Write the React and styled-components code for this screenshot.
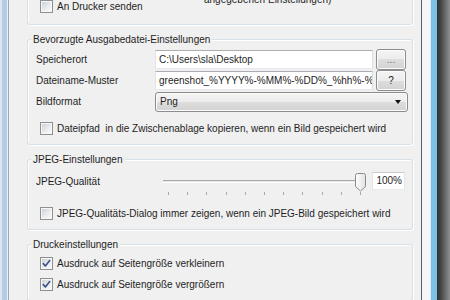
import styled, { createGlobalStyle } from "styled-components";

const GlobalStyle = createGlobalStyle`
  html, body {
    margin: 0;
    padding: 0;
  }
  body {
    width: 450px;
    height: 300px;
    overflow: hidden;
    font-family: "Liberation Sans", Arial, sans-serif;
    font-size: 10px;
    color: #1e1e1e;
  }
`;

const Window = styled.div`
  display: flex;
  width: 450px;
  height: 300px;
  overflow: hidden;
`;

const LeftFrame = styled.div`
  flex: none;
  width: 9px;
  background: linear-gradient(
    to right,
    #dde6ee 0 2px,
    #b3cde5 2px 7px,
    #eaf1f8 7px 8px,
    #9eabb6 8px 9px
  );
`;

const RightFrame = styled.div`
  flex: none;
  width: 29px;
  background: linear-gradient(
    to right,
    #5c6064 0 1px,
    #f3f5f7 1px 9px,
    #dfe9f2 9px 10px,
    #7cc0ea 10px 16px,
    #2c2e30 16px,
    #464748 20px,
    #8f9091 29px
  );
`;

const Content = styled.main`
  flex: 1;
  min-width: 0;
  overflow: hidden;
  margin-top: -36px;
  padding: 0 8px 0 18px;
  display: flex;
  flex-direction: column;
  gap: 8px;
  background: #f0f0f0;
`;

const Group = styled.fieldset`
  margin: 0;
  min-width: 0;
  padding: ${(p) => p.$pad};
  border: 1px solid #d5dfe5;
  border-radius: 3px;
  box-shadow: 1px 1px 0 #fff, inset 1px 1px 0 #fff;
`;

const Legend = styled.legend`
  margin-left: -5px;
  padding: 0 2px;
  line-height: 13px;
  background: #f0f0f0;
`;

const Body = styled.div`
  display: flex;
  flex-direction: column;
  gap: ${(p) => p.$gap}px;
`;

const TargetRow = styled.div`
  display: grid;
  grid-template-columns: 168px 1fr;
  align-items: end;
`;

const Note = styled.div`
  line-height: 13px;
  margin-bottom: 7px;
  white-space: nowrap;
`;

const CheckRow = styled.label`
  display: flex;
  align-items: center;
  gap: 4px;
  margin-left: 4px;
  line-height: 13px;
  white-space: nowrap;
`;

const Box = styled.span`
  flex: none;
  display: flex;
  align-items: center;
  justify-content: center;
  box-sizing: border-box;
  width: 13px;
  height: 13px;
  border: 1px solid #8e8f8f;
  background: linear-gradient(135deg, #c8ccd2 0%, #e9ebee 55%, #fbfbfb 100%);
  box-shadow: inset 0 0 0 1px #f7f7f7;
`;

const FormGrid = styled.div`
  display: grid;
  grid-template-columns: 116px minmax(0, 1fr) 30px;
  grid-auto-rows: 21px;
  column-gap: 3px;
  align-items: center;
`;

const Label = styled.span`
  line-height: 13px;
  white-space: nowrap;
`;

const TextField = styled.div`
  box-sizing: border-box;
  height: 19px;
  padding: 0 3px;
  line-height: 17px;
  white-space: nowrap;
  overflow: hidden;
  background: #fff;
  border: 1px solid;
  border-color: #abadb3 #dbdfe6 #e3e9ef #e2e3ea;
  text-align: ${(p) => (p.$right ? "right" : "left")};
`;

const Button = styled.button`
  box-sizing: border-box;
  height: 21px;
  padding: 0;
  font: inherit;
  color: ${(p) => (p.$muted ? "#6a6a6a" : "#1e1e1e")};
  border: 1px solid #8c8c8c;
  border-radius: 3px;
  background: linear-gradient(#f4f4f4 0%, #ececec 50%, #dedede 50%, #d2d2d2 100%);
  box-shadow: inset 0 0 0 1px #fbfbfb;
`;

const Select = styled.div`
  grid-column: 2 / 4;
  box-sizing: border-box;
  height: 20px;
  margin-right: -2px;
  padding: 0 6px 0 4px;
  display: flex;
  align-items: center;
  justify-content: space-between;
  border: 1px solid #8c8c8c;
  border-radius: 3px;
  background: linear-gradient(#f4f4f4 0%, #ececec 50%, #dedede 50%, #d2d2d2 100%);
  box-shadow: inset 0 0 0 1px #fbfbfb;
`;

const Arrow = styled.span`
  width: 0;
  height: 0;
  border-left: 3.5px solid transparent;
  border-right: 3.5px solid transparent;
  border-top: 4px solid #111;
`;

const QualityRow = styled.div`
  display: flex;
  align-items: flex-start;
`;

const QualityLabel = styled(Label)`
  flex: none;
  width: 124px;
  margin-top: 5px;
`;

const Slider = styled.div`
  position: relative;
  flex: none;
  width: 206px;
  height: 28px;
`;

const Track = styled.div`
  margin: 10px 4px 0 3px;
  height: 3px;
  box-sizing: border-box;
  background: #e6e8ea;
  border-top: 1px solid #a8a8a8;
  border-bottom: 1px solid #fff;
`;

const Ticks = styled.div`
  display: flex;
  justify-content: space-between;
  margin: 9px 5px 0 8px;
`;

const Tick = styled.span`
  width: 1px;
  height: 3px;
  background: #a9a9a9;
`;

const Thumb = styled.svg`
  position: absolute;
  left: 195px;
  top: 3px;
`;

const ValueBox = styled(TextField)`
  flex: none;
  width: 33px;
  height: 18px;
  margin: 2px 0 0 6px;
  line-height: 16px;
  padding: 0 2px;
  border-color: #c9cbd0 #e2e5ea #e6ebf0 #e2e4ea;
`;

function Check({ checked, children }) {
  return (
    <CheckRow>
      <Box>
        {checked && (
          <svg width="9" height="9" viewBox="0 0 9 9">
            <path
              d="M1.3 4.6 L3.4 7 L7.7 1.6"
              fill="none"
              stroke="#3c4f86"
              strokeWidth="1.6"
              strokeLinecap="round"
              strokeLinejoin="round"
            />
          </svg>
        )}
      </Box>
      <span>{children}</span>
    </CheckRow>
  );
}

export default function App() {
  return (
    <>
      <GlobalStyle />
      <Window>
        <LeftFrame />
        <Content>
          <Group $pad="3px 6px 11px 8px">
            <Legend>Ziel</Legend>
            <TargetRow>
              <Check>An Drucker senden</Check>
              <Note>
                Druckerauswahl anzeigen (mit den
                <br />
                angegebenen Einstellungen)
              </Note>
            </TargetRow>
          </Group>

          <Group $pad="3px 6px 9px 8px">
            <Legend>Bevorzugte Ausgabedatei-Einstellungen</Legend>
            <Body $gap={10}>
              <FormGrid>
                <Label>Speicherort</Label>
                <TextField>C:\Users\sla\Desktop</TextField>
                <Button $muted>...</Button>
                <Label>Dateiname-Muster</Label>
                <TextField>greenshot_%YYYY%-%MM%-%DD%_%hh%-%mm%-%ss%</TextField>
                <Button>?</Button>
                <Label>Bildformat</Label>
                <Select>
                  <span>Png</span>
                  <Arrow />
                </Select>
              </FormGrid>
              <Check>Dateipfad &nbsp;in die Zwischenablage kopieren, wenn ein Bild gespeichert wird</Check>
            </Body>
          </Group>

          <Group $pad="4px 6px 9px 8px">
            <Legend>JPEG-Einstellungen</Legend>
            <Body $gap={9}>
              <QualityRow>
                <QualityLabel>JPEG-Qualität</QualityLabel>
                <Slider>
                  <Track />
                  <Ticks>
                    {Array.from({ length: 11 }, (_, i) => (
                      <Tick key={i} />
                    ))}
                  </Ticks>
                  <Thumb width="11" height="19" viewBox="0 0 11 19">
                    <defs>
                      <linearGradient id="thumbFill" x1="0" y1="0" x2="1" y2="0">
                        <stop offset="0" stopColor="#ffffff" />
                        <stop offset="1" stopColor="#e2e2e2" />
                      </linearGradient>
                    </defs>
                    <path
                      d="M0.5 2.5 Q0.5 0.5 2.5 0.5 H8.5 Q10.5 0.5 10.5 2.5 V13.5 L5.5 18 L0.5 13.5 Z"
                      fill="url(#thumbFill)"
                      stroke="#8a8a8a"
                    />
                  </Thumb>
                </Slider>
                <ValueBox $right>100%</ValueBox>
              </QualityRow>
              <Check>JPEG-Qualitäts-Dialog immer zeigen, wenn ein JPEG-Bild gespeichert wird</Check>
            </Body>
          </Group>

          <Group $pad="6px 6px 9px 8px">
            <Legend>Druckeinstellungen</Legend>
            <Body $gap={8}>
              <Check checked>Ausdruck auf Seitengröße verkleinern</Check>
              <Check checked>Ausdruck auf Seitengröße vergrößern</Check>
            </Body>
          </Group>
        </Content>
        <RightFrame />
      </Window>
    </>
  );
}
